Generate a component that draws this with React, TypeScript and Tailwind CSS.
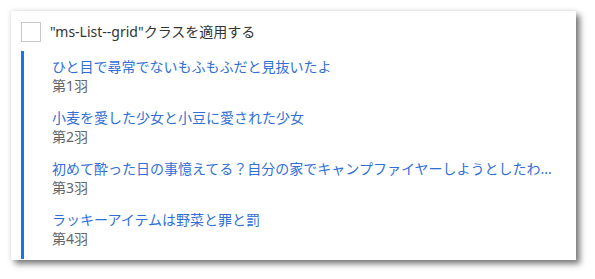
import React from 'react';

const items = [
  { title: 'ひと目で尋常でないもふもふだと見抜いたよ', sub: '第1羽' },
  { title: '小麦を愛した少女と小豆に愛された少女', sub: '第2羽' },
  { title: '初めて酔った日の事憶えてる？自分の家でキャンプファイヤーしようとしたわ...', sub: '第3羽' },
  { title: 'ラッキーアイテムは野菜と罪と罰', sub: '第4羽' }
];

const App = () => {
  return (
    <div
      className="w-[595px] h-[279px] bg-white pt-[11px] pl-[11px]"
      style={{ fontFamily: '"Noto Sans", "Noto Sans CJK JP", sans-serif' }}
    >
      <div className="w-[565px] h-[249px] bg-white shadow-[4px_4px_6px_rgba(0,0,0,0.5),0_0_5px_rgba(0,0,0,0.12)] pt-[11px] pl-[10px] pr-[18px]">
        {/* Checkbox row */}
        <label className="flex items-center h-[20px]">
          <span className="w-[20px] h-[20px] border border-[#c8c8c8] bg-white shrink-0" />
          <span className="ml-[9px] text-[14px] leading-[20px] text-[#333333]">
            "ms-List--grid"クラスを適用する
          </span>
        </label>

        {/* List */}
        <div className="mt-[9px] border-l-[3px] border-[#1a73e8] pt-[6px] pl-[28px] flex flex-col gap-[13px] h-[208px]">
          {items.map((item) => (
            <div key={item.sub} className="flex flex-col min-w-0">
              <span className="text-[14px] leading-[19px] text-[#2f6fd6] whitespace-nowrap">
                {item.title}
              </span>
              <span className="text-[14px] leading-[19px] text-[#666666]">{item.sub}</span>
            </div>
          ))}
        </div>
      </div>
    </div>
  );
};

export default App;
